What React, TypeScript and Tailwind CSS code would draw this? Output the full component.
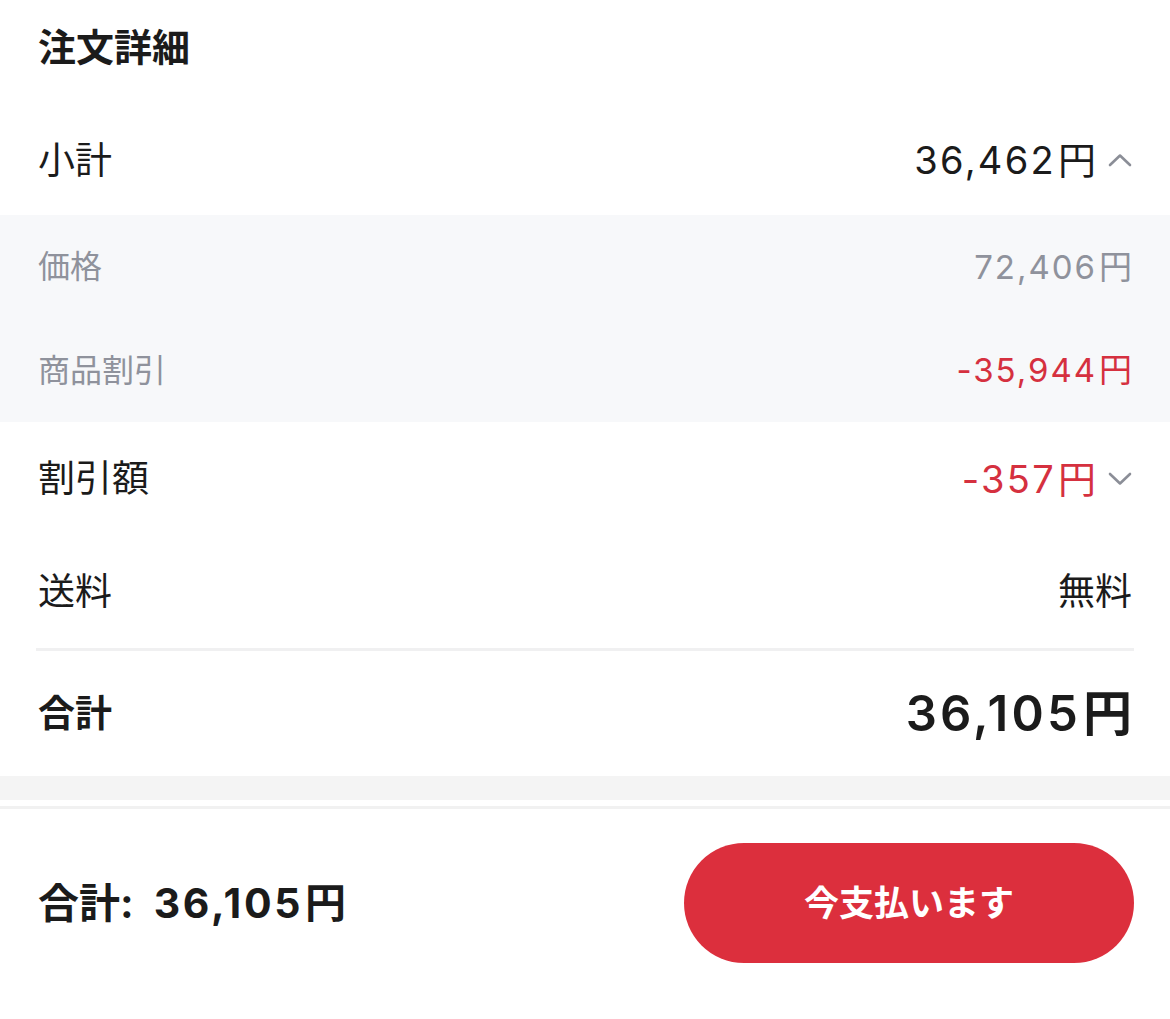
import React from "react";

const font = { fontFamily: '"Inter", "Noto Sans CJK JP", sans-serif' };

function Chevron({ up }: { up?: boolean }) {
  return (
    <svg width="24" height="14" viewBox="0 0 24 14" className="ml-[12px] shrink-0">
      <polyline
        points={up ? "2,12 12,2.5 22,12" : "2,2 12,11.5 22,2"}
        fill="none"
        stroke="#8b8e97"
        strokeWidth="2.6"
        strokeLinecap="round"
        strokeLinejoin="round"
      />
    </svg>
  );
}

function Yen({ v, className = "" }: { v: string; className?: string }) {
  return (
    <span className={className}>
      <span className="tracking-[0.06em]">{v}</span>
      <span className="ml-[2px]">円</span>
    </span>
  );
}

export default function App() {
  return (
    <div className="w-[1170px] h-[1019px] bg-white text-[#1b1b1b] flex flex-col" style={font}>
      <div className="h-[105px] px-[38px] pt-[23px]">
        <h1 className="text-[38px] leading-[48px] font-bold">注文詳細</h1>
      </div>

      <div className="h-[110px] px-[38px] flex items-center justify-between">
        <span className="text-[37px] leading-none">小計</span>
        <div className="flex items-center">
          <Yen v="36,462" className="text-[38px] leading-none" />
          <Chevron up />
        </div>
      </div>

      <div className="bg-[#f7f8fa]">
        <div className="h-[104px] px-[38px] flex items-center justify-between text-[#8f929c]">
          <span className="text-[32px] leading-none">価格</span>
          <Yen v="72,406" className="text-[33px] leading-none" />
        </div>
        <div className="h-[103px] px-[38px] flex items-center justify-between">
          <span className="text-[32px] leading-none text-[#8f929c]">商品割引</span>
          <Yen v="-35,944" className="text-[33px] leading-none text-[#d5303f]" />
        </div>
      </div>

      <div className="h-[113px] px-[38px] flex items-center justify-between">
        <span className="text-[37px] leading-none">割引額</span>
        <div className="flex items-center">
          <Yen v="-357" className="text-[38px] leading-none text-[#d5303f]" />
          <Chevron />
        </div>
      </div>

      <div className="h-[113px] px-[38px] flex items-center justify-between">
        <span className="text-[37px] leading-none">送料</span>
        <span className="text-[37px] leading-none">無料</span>
      </div>

      <div className="mx-[36px] h-[3px] bg-[#f0f0f1]" />

      <div className="h-[125px] px-[38px] flex items-center justify-between">
        <span className="text-[37px] leading-none font-bold">合計</span>
        <span className="text-[49px] leading-none font-semibold">
          <span className="tracking-[0.065em]">36,105</span>
          <span className="ml-[2px]">円</span>
        </span>
      </div>

      <div className="h-[24px] bg-[#f4f4f4]" />
      <div className="h-[6px] bg-white" />
      <div className="h-[3px] bg-[#f1f1f1]" />

      <div className="flex-1 px-[36px] pb-[22px] flex items-center justify-between">
        <span className="pl-[2px] text-[41px] leading-none font-bold">
          合計:<span className="ml-[20px] tracking-[0.065em]">36,105</span>
          <span className="ml-[2px]">円</span>
        </span>
        <button className="w-[450px] h-[120px] rounded-[60px] bg-[#dc2f3d] text-white text-[35px] font-semibold leading-none flex items-center justify-center">
          今支払います
        </button>
      </div>
    </div>
  );
}
